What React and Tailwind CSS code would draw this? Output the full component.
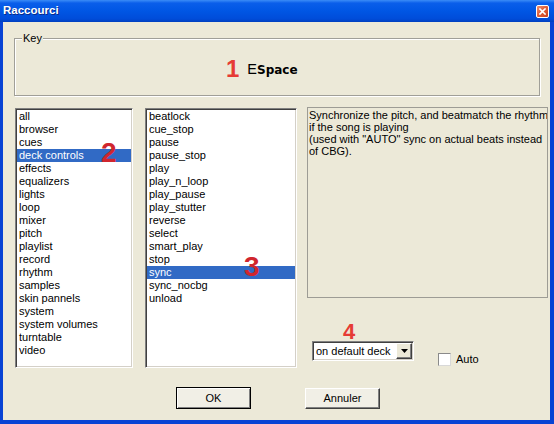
const CATEGORIES = [
  'all', 'browser', 'cues', 'deck controls', 'effects', 'equalizers', 'lights', 'loop', 'mixer',
  'pitch', 'playlist', 'record', 'rhythm', 'samples', 'skin pannels', 'system', 'system volumes',
  'turntable', 'video',
]

const ACTIONS = [
  'beatlock', 'cue_stop', 'pause', 'pause_stop', 'play', 'play_n_loop', 'play_pause', 'play_stutter',
  'reverse', 'select', 'smart_play', 'stop', 'sync', 'sync_nocbg', 'unload',
]

const SUNKEN =
  'border border-t-[#808080] border-l-[#808080] border-b-white border-r-white shadow-[inset_1px_1px_0_#404040,inset_-1px_-1px_0_#d4d0c8]'

function ListBox({ items, selected, className, children }) {
  return (
    <div className={`relative bg-white p-[1px] overflow-hidden ${SUNKEN} ${className}`}>
      {items.map((item) => (
        <div
          key={item}
          className={`h-[13px] leading-[13px] pl-[2px] whitespace-nowrap
            ${item === selected ? 'bg-[#316ac5] text-white' : 'text-black'}`}
        >
          {item}
        </div>
      ))}
      {children}
    </div>
  )
}

function TitleBar() {
  return (
    <div className="h-[22px] flex items-center justify-between pl-[3px] pr-[5px] bg-[linear-gradient(to_bottom,#3b8cf7_0%,#0a5eea_14%,#0056e4_50%,#004cd9_86%,#003fbf_100%)]">
      <span className="text-white font-bold text-[11.5px] leading-none [text-shadow:1px_1px_0_#0a2a8a]">
        Raccourci
      </span>
      <div className="w-[13px] h-[13px] rounded-[2px] border border-white bg-[linear-gradient(135deg,#f09070_0%,#e0603a_45%,#c8401e_100%)] flex items-center justify-center">
        <svg width="7" height="7" viewBox="0 0 7 7">
          <path d="M1 1 L6 6 M6 1 L1 6" stroke="#fff" strokeWidth="1.6" strokeLinecap="square" />
        </svg>
      </div>
    </div>
  )
}

function Button({ label, isDefault }) {
  return isDefault ? (
    <div className="w-[75px] h-[22px] border border-black bg-[#f1efe6] shadow-[inset_1px_1px_0_#fff,inset_-1px_-1px_0_#808080] flex items-center justify-center text-[11px] text-black">
      {label}
    </div>
  ) : (
    <div className="w-[75px] h-[21px] border border-t-white border-l-white border-b-[#404040] border-r-[#404040] bg-[#f1efe6] shadow-[inset_-1px_-1px_0_#808080] flex items-center justify-center text-[11px] text-black">
      {label}
    </div>
  )
}

export default function App() {
  return (
    <div className="w-[554px] h-[424px] flex flex-col bg-[#0843d4] overflow-hidden font-['Liberation_Sans',Arial,sans-serif]">
      <TitleBar />
      <div className="flex-1 ml-[3px] mr-[4px] mb-[4px] bg-[#ece9d8] flex flex-col text-[11px]">
        {/* key group */}
        <div className="relative mt-[16px] ml-[11px] w-[526px] h-[58px] border border-[#a09f98] shadow-[inset_1px_1px_0_#fff,1px_1px_0_#fff]">
          <span className="absolute -top-[7px] left-[7px] px-[1px] bg-[#ece9d8] leading-[13px] text-black">Key</span>
          <div className="flex items-baseline pl-[211px] pt-[15px]">
            <span className="relative top-[3px] text-[24px] leading-none font-bold text-[#e63b35]">1</span>
            <span className="ml-[8px] text-[14.5px] leading-none text-black">E</span>
            <span className="font-['DejaVu_Sans',sans-serif] text-[12px] leading-none font-bold text-black">Space</span>
          </div>
        </div>

        <div className="flex items-start mt-[12px]">
          <ListBox items={CATEGORIES} selected="deck controls" className="ml-[12px] w-[118px] h-[260px]">
            <span className="absolute left-[85px] top-[30px] text-[28px] leading-none font-bold text-[#d0262e]">2</span>
          </ListBox>
          <ListBox items={ACTIONS} selected="sync" className="ml-[12px] w-[152px] h-[260px]">
            <span className="absolute left-[98px] top-[144px] text-[28px] leading-none font-bold text-[#d0262e]">3</span>
          </ListBox>

          <div className="ml-[10px] -mt-[1px] w-[241px] flex flex-col">
            <div className="h-[191px] border border-[#9d9c95] pl-[1px] pt-[1px] leading-[12px] text-black whitespace-nowrap overflow-hidden">
              <div>Synchronize the pitch, and beatmatch the rhythm</div>
              <div>if the song is playing</div>
              <div>(used with &quot;AUTO&quot; sync on actual beats instead</div>
              <div>of CBG).</div>
            </div>
            <div className="flex items-start">
              <div className="ml-[5px] flex flex-col">
                <span className="mt-[25px] pl-[31px] h-[18px] leading-[18px] text-[22px] font-bold text-[#e63b35]">4</span>
                <div className={`w-[102px] h-[20px] bg-white p-[1px] flex items-stretch ${SUNKEN}`}>
                  <span className="flex-1 pl-[2px] leading-[16px] text-black whitespace-nowrap">on default deck</span>
                  <div className="w-[16px] bg-[#ece9d8] border border-t-white border-l-white border-b-[#404040] border-r-[#404040] shadow-[inset_-1px_-1px_0_#808080] flex items-center justify-center">
                    <svg width="7" height="4" viewBox="0 0 7 4">
                      <path d="M0 0 H7 L3.5 4 Z" fill="#000" />
                    </svg>
                  </div>
                </div>
              </div>
              <div className="ml-[24px] mt-[55px] flex items-center">
                <div className="w-[13px] h-[13px] bg-white border border-[#8a8a8a] border-b-[#d8d8d8] border-r-[#d8d8d8]" />
                <span className="ml-[5px] leading-[13px] text-black">Auto</span>
              </div>
            </div>
          </div>
        </div>

        <div className="flex items-center pl-[173px] gap-[54px] mt-[19px]">
          <Button label="OK" isDefault />
          <Button label="Annuler" />
        </div>
      </div>
    </div>
  )
}
